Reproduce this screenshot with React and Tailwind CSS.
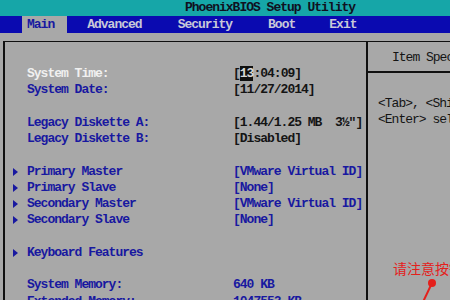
import React from 'react';

const rows = [
  { label: 'System Time:', value: 'time', hi: true },
  { label: 'System Date:', value: '[11/27/2014]', dark: true },
  null,
  { label: 'Legacy Diskette A:', value: '[1.44/1.25 MB  3½"]', dark: true },
  { label: 'Legacy Diskette B:', value: '[Disabled]', dark: true },
  null,
  { label: 'Primary Master', value: '[VMware Virtual ID]', arrow: true },
  { label: 'Primary Slave', value: '[None]', arrow: true },
  { label: 'Secondary Master', value: '[VMware Virtual ID]', arrow: true },
  { label: 'Secondary Slave', value: '[None]', arrow: true },
  null,
  { label: 'Keyboard Features', value: '', arrow: true },
  null,
  { label: 'System Memory:', value: '640 KB' },
  { label: 'Extended Memory:', value: '1047552 KB' },
];

const tabs = ['Main', 'Advanced', 'Security', 'Boot', 'Exit'];
const tabX = ['ml-[22px] pl-[5px] pr-[13px]', 'ml-[20px]', 'ml-[36px]', 'ml-[36px]', 'ml-[34px]'];

export default function App() {
  return (
    <div className="w-[450px] h-[300px] overflow-hidden bg-[#a8a8a8] flex flex-col font-['Liberation_Mono',monospace] text-[13px] tracking-[-1px] font-bold relative">
      {/* title */}
      <div className="h-[16px] bg-[#16a6a8] text-[#101020] leading-[16px] pl-[185px] whitespace-nowrap">
        PhoenixBIOS Setup Utility
      </div>

      {/* menu bar */}
      <div className="h-[17px] bg-[#0a0ab0] flex items-stretch whitespace-nowrap">
        {tabs.map((t, i) => (
          <div
            key={t}
            className={`${tabX[i]} leading-[17px] ${
              i === 0 ? 'bg-[#a8a8a8] text-[#1818a0]' : 'text-[#c8c8d8]'
            }`}
          >
            {t}
          </div>
        ))}
      </div>

      {/* body */}
      <div className="flex-1 pt-[8px] pl-[3px]">
        <div className="h-full border-l-2 border-t border-[#101010] flex">
          {/* left */}
          <div className="w-[361px] pt-[24px] leading-[16.25px]">
            {rows.map((r, i) =>
              r === null ? (
                <div key={i} className="h-[16.25px]" />
              ) : (
                <div key={i} className="flex h-[16.25px] whitespace-pre">
                  <div className="w-[22px] flex items-center justify-end">
                    {r.arrow && (
                      <span className="w-0 h-0 border-y-[4px] border-y-transparent border-l-[5px] border-l-[#1818a0] mr-[9px]" />
                    )}
                  </div>
                  <div className={`w-[206px] ${r.hi ? 'text-[#f0f0f0]' : 'text-[#1818a0]'}`}>{r.label}</div>
                  <div className={r.dark ? 'text-[#141414]' : 'text-[#1818a0]'}>
                    {r.value === 'time' ? (
                      <span className="text-[#141414]">
                        [<span className="bg-[#101010] text-[#d8d8d8]">13</span>:04:09]
                      </span>
                    ) : (
                      r.value
                    )}
                  </div>
                </div>
              )
            )}
          </div>

          {/* right */}
          <div className="flex-1 border-l-2 border-[#101010] flex flex-col whitespace-nowrap overflow-hidden">
            <div className="h-[31px] leading-[31px] pl-[24px] text-[#141414] font-normal border-b-2 border-[#101010]">
              Item Specific Help
            </div>
            <div className="pt-[23px] pl-[10px] leading-[16.25px] text-[#141414] font-normal">
              <div>&lt;Tab&gt;, &lt;Shift-Tab&gt;, or</div>
              <div>&lt;Enter&gt; selects field.</div>
            </div>
          </div>
        </div>
      </div>

      {/* red annotation */}
      <div className="absolute left-[393px] top-[259px] text-[#e4201c] text-[14px] leading-[18px] tracking-normal font-normal font-['Noto_Sans_CJK_SC',sans-serif] whitespace-nowrap">
        请注意按键
      </div>
      <svg className="absolute left-[415px] top-[276px]" width="30" height="24" viewBox="0 0 30 24">
        <line x1="17" y1="7" x2="8" y2="26" stroke="#e4201c" strokeWidth="2" />
        <circle cx="17" cy="7" r="4" fill="#e4201c" />
      </svg>
    </div>
  );
}
